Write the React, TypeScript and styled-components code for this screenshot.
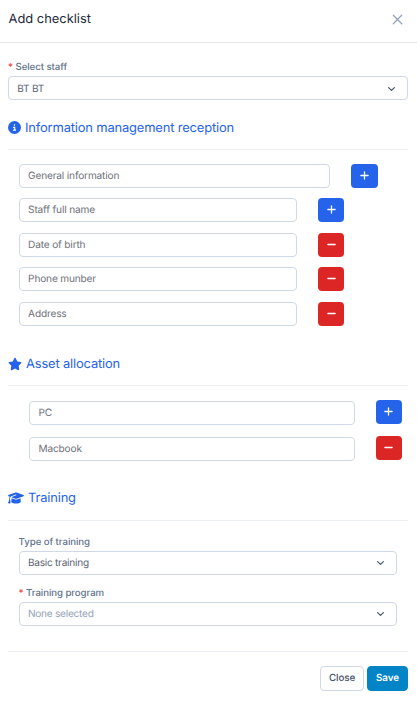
import React from "react";
import styled, { createGlobalStyle } from "styled-components";
import { FaCircleInfo, FaGraduationCap, FaStar } from "react-icons/fa6";

const GlobalStyle = createGlobalStyle`
  *, *::before, *::after { box-sizing: border-box; }
  body {
    margin: 0;
    background: #fff;
    color: #475569;
    font-family: Inter, "Liberation Sans", sans-serif;
    font-size: 10px;
    text-rendering: geometricPrecision;
  }
  button, input { font: inherit; text-rendering: inherit; }
`;

const Dialog = styled.div`
  width: 417px;
  height: 703px;
  display: flex;
  flex-direction: column;
  background: #fff;
`;

const Header = styled.header`
  height: 43px;
  flex: none;
  display: flex;
  align-items: center;
  justify-content: space-between;
  padding: 0 14px 4px 8.5px;
  border-bottom: 1px solid #e5e7eb;
`;

const Title = styled.h1`
  margin: 0;
  padding-top: 1px;
  font-size: 12.9px;
  line-height: 18px;
  font-weight: 400;
  color: #1e293b;
`;

const CloseIcon = styled.button`
  display: flex;
  padding: 0;
  border: 0;
  background: none;
  color: #94a3b8;
`;

const Body = styled.main`
  display: flex;
  flex-direction: column;
  padding: 17px 9px 0 8px;
`;

const Label = styled.label`
  display: block;
  height: 16px;
  line-height: 15px;
  font-size: 9.7px;
  letter-spacing: -0.08px;
  font-weight: 500;
  color: #64748b;
`;

const Required = styled.span`
  color: #ef4444;
`;

const Select = styled.div<{ $muted?: boolean }>`
  height: 24px;
  display: flex;
  align-items: center;
  justify-content: space-between;
  padding: 1px 11px 0 8.3px;
  border: 1px solid #d0dae6;
  border-radius: 4px;
  font-size: 10.1px;
  letter-spacing: -0.25px;
  color: ${(p) => (p.$muted ? "#94a3b8" : "#5c6675")};
`;

const ChevronSvg = styled.svg`
  display: block;
  color: #475569;
`;

const SectionTitle = styled.h2<{ $top: number; $bottom?: number }>`
  display: flex;
  align-items: center;
  gap: 4px;
  height: 20px;
  margin: ${(p) => p.$top}px 0 ${(p) => p.$bottom ?? 12}px;
  font-size: 12.9px;
  letter-spacing: -0.15px;
  font-weight: 400;
  color: #2563eb;
`;

const SectionText = styled.span`
  padding-top: 2px;
`;

const Divider = styled.div`
  height: 1px;
  background: #edf0f3;
`;

const Rows = styled.div<{ $indent: number; $top: number; $gap: number }>`
  display: flex;
  flex-direction: column;
  gap: ${(p) => p.$gap}px;
  padding: ${(p) => p.$top}px 0 0 ${(p) => p.$indent}px;
`;

const Row = styled.div`
  display: flex;
  align-items: center;
  gap: 21px;
`;

const Input = styled.input<{ $width: number }>`
  width: ${(p) => p.$width}px;
  height: 24px;
  padding: 0 8.5px;
  border: 1px solid #d0dae6;
  border-radius: 4px;
  background: #fff;
  font-size: 10.1px;
  letter-spacing: -0.16px;
  outline: none;
  &::placeholder { color: #6f737a; opacity: 1; }
`;

const SquareButton = styled.button<{ $remove?: boolean; $raise?: boolean }>`
  width: 26.7px;
  height: 24px;
  display: flex;
  justify-content: center;
  align-items: center;
  margin: ${(p) => (p.$raise ? "-1px 0 1px" : "0")};
  padding: 0 0 1px;
  border: 0;
  border-radius: 4px;
  color: #fff;
  background: ${(p) => (p.$remove ? "#dc2626" : "#2563eb")};
`;

const TrainingFields = styled.div`
  padding: 14px 11px 0 10.6px;
`;

const Field = styled.div`
  & + & { margin-top: 11px; }
`;

const Footer = styled.footer`
  display: flex;
  justify-content: flex-end;
  gap: 3px;
  margin-top: 25px;
  padding-top: 14px;
  border-top: 1px solid #e9edf1;
`;

const FooterButton = styled.button<{ $primary?: boolean }>`
  width: ${(p) => (p.$primary ? 41 : 44)}px;
  height: 25px;
  padding: 0;
  border: 1px solid ${(p) => (p.$primary ? "#0284c7" : "#d0dae6")};
  border-radius: 4px;
  background: ${(p) => (p.$primary ? "#0284c7" : "#fff")};
  color: ${(p) => (p.$primary ? "#fff" : "#475569")};
  font-size: 9.8px;
  letter-spacing: -0.1px;
  font-weight: ${(p) => (p.$primary ? 600 : 500)};
`;

const Chevron = () => (
  <ChevronSvg width="9" height="8" viewBox="0 0 9 8" fill="none" stroke="currentColor" strokeWidth="1.2" strokeLinecap="round" strokeLinejoin="round">
    <path d="M1.6 2.6 4.5 5.4 7.4 2.6" />
  </ChevronSvg>
);

const Sign = ({ remove }: { remove?: boolean }) => (
  <svg width="9" height="9" viewBox="0 0 9 9" fill="none" stroke="currentColor" strokeWidth="1.3" strokeLinecap="round">
    <path d={remove ? "M.9 4.5h7.2" : "M.9 4.5h7.2M4.5.9v7.2"} />
  </svg>
);

type Item = { label: string; width: number; remove?: boolean };

const infoItems: Item[] = [
  { label: "General information", width: 311.6 },
  { label: "Staff full name", width: 278.1 },
  { label: "Date of birth", width: 278.1, remove: true },
  { label: "Phone munber", width: 278.1, remove: true },
  { label: "Address", width: 278.1, remove: true },
];

const assetItems: Item[] = [
  { label: "PC", width: 325.6 },
  { label: "Macbook", width: 325.6, remove: true },
];

const ItemRow = ({ item, raise }: { item: Item; raise?: boolean }) => (
  <Row>
    <Input placeholder={item.label} $width={item.width} />
    <SquareButton $remove={item.remove} $raise={raise} aria-label={item.remove ? "Remove" : "Add"}>
      <Sign remove={item.remove} />
    </SquareButton>
  </Row>
);

export default function App() {
  return (
    <>
      <GlobalStyle />
      <Dialog>
        <Header>
          <Title>Add checklist</Title>
          <CloseIcon aria-label="Close dialog">
            <svg width="11" height="11" viewBox="0 0 11 11" fill="none" stroke="currentColor" strokeWidth="1.3" strokeLinecap="round">
              <path d="M1.3 1.3l8.4 8.4M9.7 1.3L1.3 9.7" />
            </svg>
          </CloseIcon>
        </Header>
        <Body>
          <Label><Required>*</Required> Select staff</Label>
          <Select>BT BT<Chevron /></Select>

          <SectionTitle $top={17}>
            <FaCircleInfo size={13} />
            <SectionText>Information management reception</SectionText>
          </SectionTitle>
          <Divider />
          <Rows $indent={10.6} $top={14} $gap={10.4}>
            {infoItems.map((item) => <ItemRow key={item.label} item={item} />)}
          </Rows>

          <SectionTitle $top={28} $bottom={11}>
            <FaStar size={14} />
            <SectionText>Asset allocation</SectionText>
          </SectionTitle>
          <Divider />
          <Rows $indent={21} $top={15} $gap={12}>
            {assetItems.map((item) => <ItemRow key={item.label} item={item} raise />)}
          </Rows>

          <SectionTitle $top={27}>
            <FaGraduationCap size={16} />
            <SectionText>Training</SectionText>
          </SectionTitle>
          <Divider />
          <TrainingFields>
            <Field>
              <Label>Type of training</Label>
              <Select>Basic training<Chevron /></Select>
            </Field>
            <Field>
              <Label><Required>*</Required> Training program</Label>
              <Select $muted>None selected<Chevron /></Select>
            </Field>
          </TrainingFields>

          <Footer>
            <FooterButton>Close</FooterButton>
            <FooterButton $primary>Save</FooterButton>
          </Footer>
        </Body>
      </Dialog>
    </>
  );
}
